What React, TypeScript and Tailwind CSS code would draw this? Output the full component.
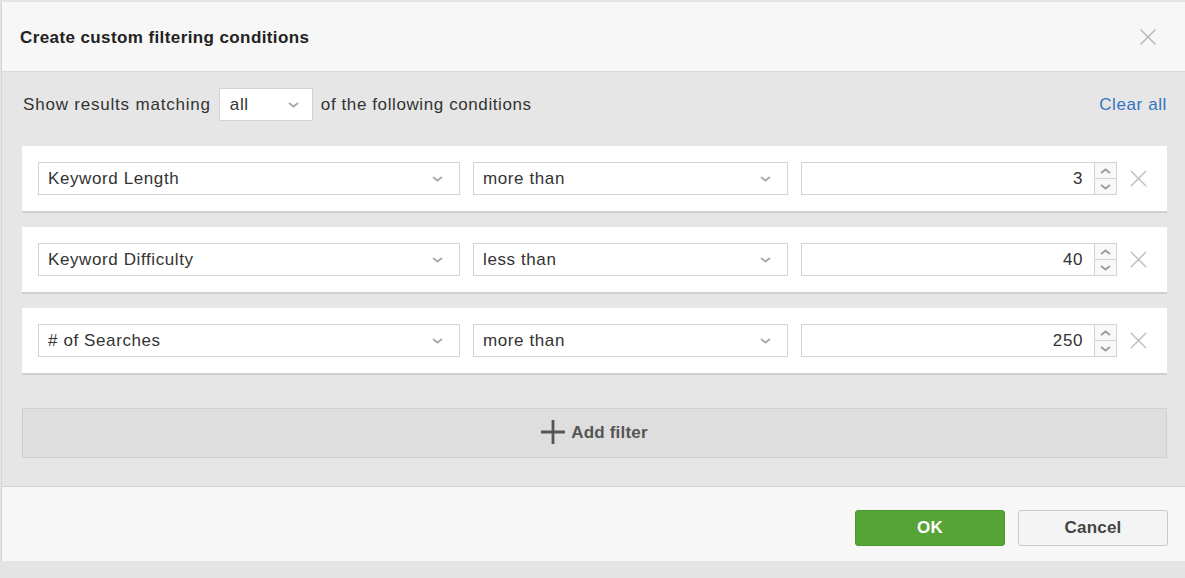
import { X } from "lucide-react";

const rows = [
  { field: "Keyword Length", op: "more than", value: "3" },
  { field: "Keyword Difficulty", op: "less than", value: "40" },
  { field: "# of Searches", op: "more than", value: "250" },
];

function Chevron({ className = "", stroke = "#a8a8a8" }: { className?: string; stroke?: string }) {
  return (
    <svg width="11" height="6" viewBox="0 0 11 6" className={className}>
      <path d="M1 1l4.5 3.5L10 1" fill="none" stroke={stroke} strokeWidth="1.8" />
    </svg>
  );
}

function Select({ label, w }: { label: string; w: string }) {
  return (
    <div className={`${w} h-[33px] shrink-0 flex items-center justify-between border border-[#d3d3d3] bg-white pl-[9px] pr-[16px]`}>
      <span>{label}</span>
      <Chevron />
    </div>
  );
}

export default function App() {
  return (
    <div className="w-[1185px] h-[578px] bg-[#e4e4e4] pt-[2px] text-[17px] tracking-[0.6px] text-[#333] overflow-hidden" style={{ fontFamily: '"Liberation Sans", Arial, sans-serif' }}>
      <div className="ml-px border-l border-[#d6d6d6]">
        {/* header */}
        <div className="h-[70px] bg-[#f7f7f7] border-b border-[#d9d9d9] flex items-center justify-between pl-[18px] pr-[23px]">
          <span className="font-bold tracking-[0.4px] text-[#222] pt-[2px]">Create custom filtering conditions</span>
          <X className="w-[28px] h-[28px] text-[#b8b8b8]" strokeWidth={1.25} />
        </div>

        {/* body */}
        <div className="bg-[#e6e6e6] pl-[20px] pr-[18px] pt-[16px] pb-[28px] border-b border-[#d6d6d6]">
          <div className="flex items-center justify-between h-[33px]">
            <div className="flex items-center">
              <span className="ml-px tracking-[0.8px]">Show results matching</span>
              <div className="ml-[8px] w-[94px] h-[33px] bg-white border border-[#d3d3d3] flex items-center justify-between pl-[10px] pr-[13px]">
                <span>all</span>
                <Chevron />
              </div>
              <span className="ml-[8px]">of the following conditions</span>
            </div>
            <span className="text-[#3573c2]">Clear all</span>
          </div>

          <div className="mt-[25px] flex flex-col gap-[14px]">
            {rows.map((r) => (
              <div key={r.field} className="h-[67px] bg-white border-b-2 border-[#cfcfcf] flex items-center pl-[16px]">
                <Select label={r.field} w="w-[422px]" />
                <div className="w-[13px]" />
                <Select label={r.op} w="w-[315px]" />
                <div className="w-[13px]" />
                <div className="w-[293px] h-[33px] border border-[#d3d3d3] border-r-0 bg-white flex items-center justify-end pr-[11px]">
                  {r.value}
                </div>
                <div className="w-[23px] h-[33px] border border-[#d3d3d3] bg-[#f8f8f8] flex flex-col">
                  <div className="flex-1 flex items-center justify-center border-b border-[#d3d3d3]">
                    <Chevron className="rotate-180" stroke="#9a9a9a" />
                  </div>
                  <div className="flex-1 flex items-center justify-center">
                    <Chevron stroke="#9a9a9a" />
                  </div>
                </div>
                <X className="ml-[7px] w-[29px] h-[29px] text-[#c0c0c0]" strokeWidth={1.25} />
              </div>
            ))}
          </div>

          <div className="mt-[33px] h-[50px] bg-[#dedede] border border-[#d0d0d0] flex items-center justify-center gap-[6px] text-[#555] font-bold tracking-[0.2px]">
            <svg width="24" height="24" viewBox="0 0 24 24" className="mt-[-2px]">
              <path d="M12 0v24M0 12h24" stroke="#555" strokeWidth="2.8" fill="none" />
            </svg>
            <span>Add filter</span>
          </div>
        </div>

        {/* footer */}
        <div className="h-[74px] bg-[#f7f7f7] flex items-start justify-end gap-[13px] pt-[23px] pr-[17px]">
          <div className="w-[150px] h-[36px] rounded-[3px] bg-[#56a336] border border-[#4c9a2f] text-white font-bold tracking-[0.2px] flex items-center justify-center">OK</div>
          <div className="w-[150px] h-[36px] rounded-[3px] bg-[#f4f4f4] border border-[#c9c9c9] text-[#444] font-bold tracking-[0.2px] flex items-center justify-center">Cancel</div>
        </div>
      </div>
    </div>
  );
}
